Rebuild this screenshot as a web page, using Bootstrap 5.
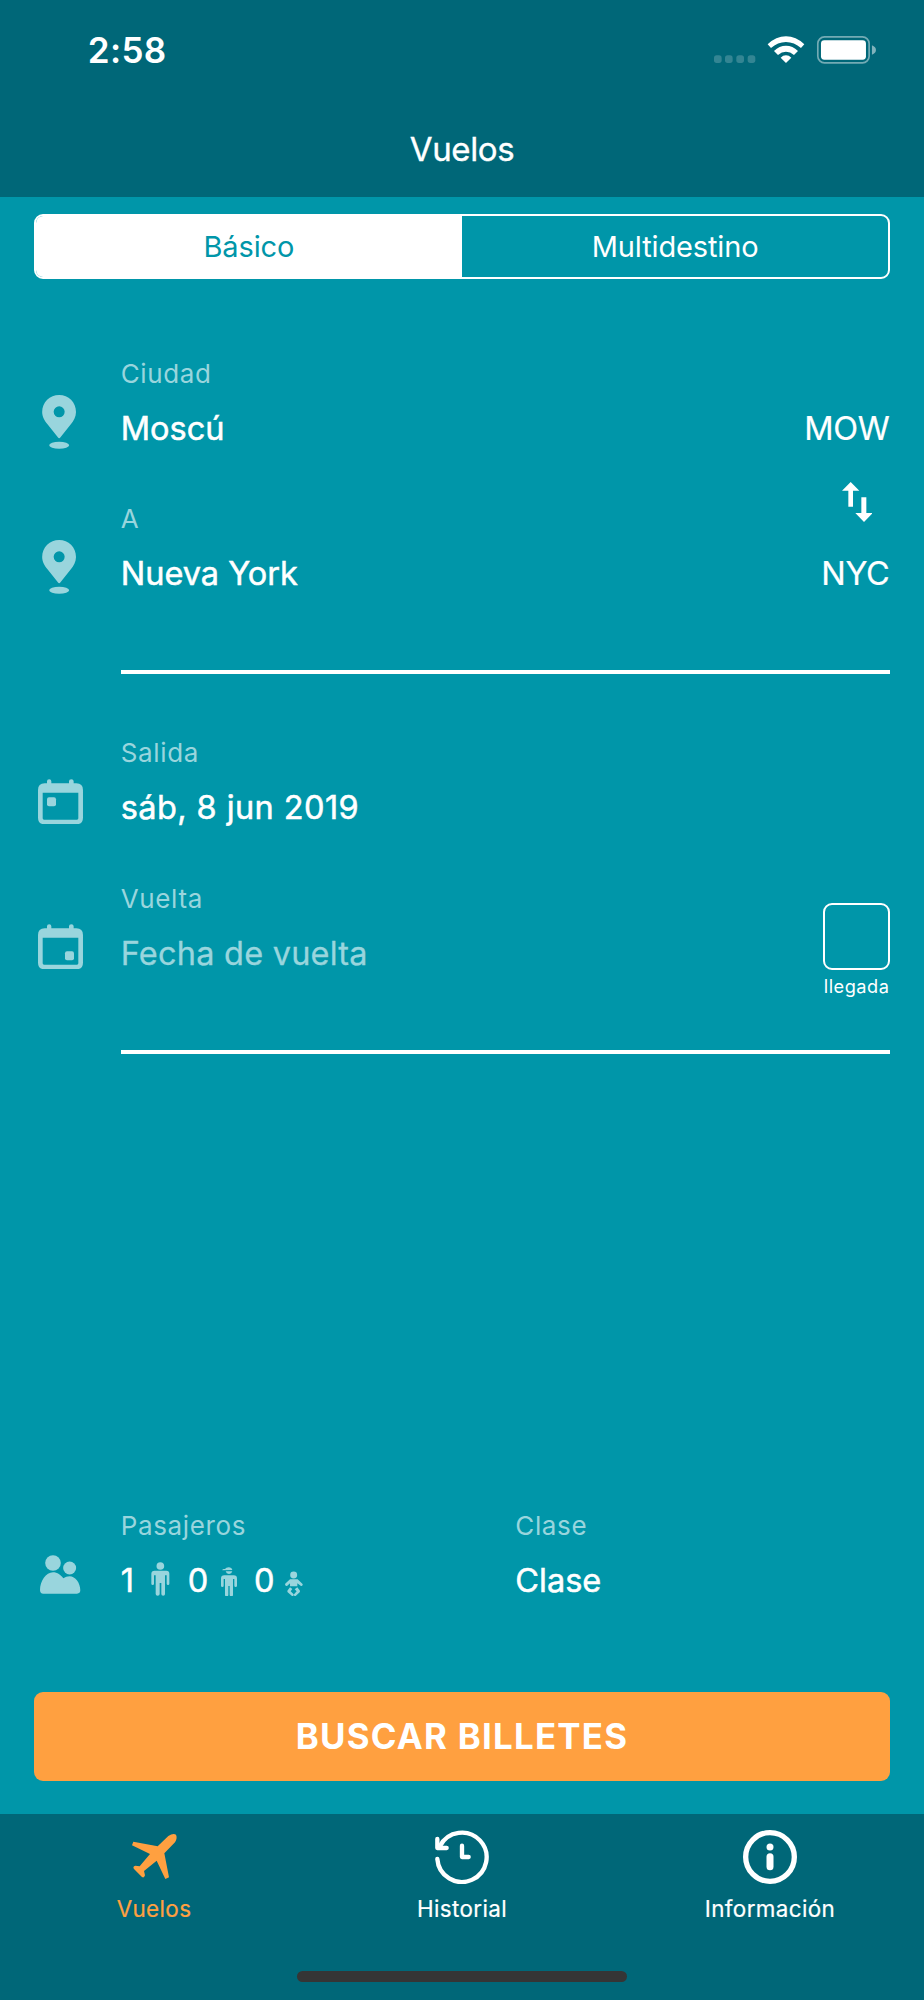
<!DOCTYPE html>
<html lang="es">
<head>
<meta charset="utf-8">
<meta name="viewport" content="width=device-width, initial-scale=1">
<title>Vuelos</title>
<link href="https://cdn.jsdelivr.net/npm/bootstrap@5.3.0/dist/css/bootstrap.min.css" rel="stylesheet">
<script src="https://cdn.jsdelivr.net/npm/bootstrap@5.3.0/dist/js/bootstrap.bundle.min.js"></script>
<style>
  :root { --teal: #0096a9; --teal-dark: #006778; --soft: #99d5dd; --orange: #ffa040; }
  body { background: var(--teal); color: #fff; font-family: Inter, "Liberation Sans", sans-serif; }
  svg { display: block; fill: currentColor; }
  .screen { width: 924px; height: 2000px; }
  .top-bar { height: 196.7px; background: var(--teal-dark); }
  .status { padding: 30px 46.7px 0 87.8px; height: 72px; }
  .status svg { margin-top: 5.3px; }
  .clock { font-size: 35px; font-weight: 600; line-height: 40px; letter-spacing: .34px; }
  .title { font-size: 33px; line-height: 40px; margin-top: 57px; letter-spacing: -.36px; -webkit-text-stroke: .35px; }
  .content { padding: 17.6px 33.7px 33px; }
  .segments { height: 65px; border: 2.3px solid #fff; border-radius: 9px; overflow: hidden; font-size: 29px; line-height: 36px; letter-spacing: -.13px; }
  .segments button { border: 0; background: none; color: #fff; padding: 1px 0 0; letter-spacing: inherit; }
  .segments .on { background: #fff; color: var(--teal); }
  .first { margin-top: 78.7px; }
  .second { margin-top: 63px; }
  .field { height: 145.2px; }
  .field-icon { width: 87px; flex: none; color: var(--soft); }
  .pin { margin: 36.8px 0 0 8.8px; }
  .cal { margin: 41.2px 0 0 4.4px; }
  .people { margin: 45.4px 0 0 6.6px; }
  .caption { font-size: 26px; line-height: 32px; color: var(--soft); margin-bottom: 19px; letter-spacing: .65px; }
  .value { font-size: 32.5px; line-height: 40px; letter-spacing: 0; -webkit-text-stroke: .5px; }
  .value .code { letter-spacing: -.4px; margin-right: 1px; -webkit-text-stroke: .2px; }
  .value.date { letter-spacing: .42px; }
  .value.placeholder-text { color: var(--soft); letter-spacing: .22px; -webkit-text-stroke: .3px; }
  .rule { height: 4px; margin: 22px 0 0 87px; background: #fff; }
  .swap { right: 18.1px; top: 123.8px; }
  .one-way { width: 67.5px; right: 0; top: 20px; }
  .box { width: 67.5px; height: 67.5px; border: 2.4px solid #fff; border-radius: 9px; }
  .one-way span { font-size: 18.2px; line-height: 24px; margin-top: 3.6px; letter-spacing: .5px; }
  .passengers { margin-bottom: 36.3px; }
  .who { width: 394.6px; }
  .count { height: 40px; }
  .count span { width: 20.5px; }
  .count svg { color: var(--soft); margin-bottom: 4.8px; }
  .adult { margin: 0 17.8px 0 10px; }
  .child { margin: 0 17.3px 0 12.6px; }
  .infant { margin-left: 10.8px; }
  .search { height: 89.5px; border: 0; border-radius: 9px; background: var(--orange); color: #fff; font-weight: 700; font-size: 34.8px; padding: 0; letter-spacing: 1.27px; }
  .tabs { height: 186px; background: var(--teal-dark); }
  .tab { color: #fff; text-decoration: none; padding-top: 16.3px; font-size: 22.4px; line-height: 28px; letter-spacing: .38px; -webkit-text-stroke: .2px; }
  .tab svg { margin-bottom: 10.5px; }
  .tab.current { color: var(--orange); }
  .home { width: 330px; height: 11px; border-radius: 6px; background: #353535; bottom: 18px; }
</style>
</head>
<body>
<div class="screen d-flex flex-column overflow-hidden">
  <header class="top-bar flex-shrink-0">
    <div class="status d-flex justify-content-between align-items-start">
      <span class="clock">2:58</span>
      <svg width="163.3" height="30" viewBox="756 106 490 90">
        <g fill-opacity=".2"><rect x="756" y="167" width="23" height="23" rx="8"/><rect x="789" y="167" width="23" height="23" rx="8"/><rect x="823" y="167" width="23" height="23" rx="8"/><rect x="857" y="167" width="23" height="23" rx="8"/></g>
        <path d="M917 134Q942 110 972 110Q1002 110 1027 134L1017 145Q997 127 972 127Q947 127 927 145ZM936 154Q952 138 972 138Q992 138 1008 154L996 166Q985 156 972 156Q959 156 948 166ZM956 174Q963 167 972 167Q981 167 988 174L972 190Z"/>
        <rect x="1067.500" y="111.500" width="154" height="78" rx="20" fill="none" stroke="#fff" stroke-opacity=".45" stroke-width="5"/>
        <path d="M1230 137Q1242 142 1242 151Q1242 160 1230 165Z" fill-opacity=".5"/>
        <rect x="1077" y="122" width="135" height="58" rx="10"/>
      </svg>
    </div>
    <h1 class="title text-center fw-normal mb-0">Vuelos</h1>
  </header>

  <main class="content flex-grow-1 d-flex flex-column">
    <div class="segments d-flex flex-shrink-0" role="tablist">
      <button class="on w-50">Básico</button>
      <button class="w-50">Multidestino</button>
    </div>

    <section class="first position-relative">
      <div class="field d-flex">
        <div class="field-icon"><svg class="pin" width="34" height="54" viewBox="126.500 165 102 162"><path fill-rule="evenodd" d="M178 165C206 165 228.500 187 228.500 216C228.500 231 221 243 213 253L182 292Q178 298 174 292L143 253C135 243 127 231 127 216C127 187 150 165 178 165ZM178 199A16.500 16.500 0 1 0 178 232A16.500 16.500 0 1 0 178 199Z"/><ellipse cx="178" cy="316" rx="30" ry="10.500"/></svg></div>
        <div class="flex-grow-1">
          <div class="caption">Ciudad</div>
          <div class="value d-flex justify-content-between"><span>Moscú</span><span class="code">MOW</span></div>
        </div>
      </div>
      <div class="field d-flex">
        <div class="field-icon"><svg class="pin" width="34" height="54" viewBox="126.500 165 102 162"><path fill-rule="evenodd" d="M178 165C206 165 228.500 187 228.500 216C228.500 231 221 243 213 253L182 292Q178 298 174 292L143 253C135 243 127 231 127 216C127 187 150 165 178 165ZM178 199A16.500 16.500 0 1 0 178 232A16.500 16.500 0 1 0 178 199Z"/><ellipse cx="178" cy="316" rx="30" ry="10.500"/></svg></div>
        <div class="flex-grow-1">
          <div class="caption">A</div>
          <div class="value d-flex justify-content-between"><span>Nueva York</span><span class="code">NYC</span></div>
        </div>
      </div>
      <svg class="swap position-absolute" width="30.700" height="40" viewBox="425 307 92 120"><path d="M451 307L477 333H458V381H444V333H425ZM483 353H498V400H517L491 427L465 400H483Z"/></svg>
      <div class="rule"></div>
    </section>

    <section class="second">
      <div class="field d-flex">
        <div class="field-icon"><svg class="cal" width="45" height="45.300" viewBox="114 146 135 136"><path fill-rule="evenodd" d="M141 159V153Q141 147 147.500 147Q154 147 154 153V159H207V153Q207 147 214 147Q221 147 221 153V159H229Q249 159 249 179V262Q249 282 229 282H134Q114 282 114 262V179Q114 159 134 159ZM128 187V264Q128 268 132 268H231Q235 268 235 264V187Z"/><rect x="141" y="201" width="27" height="27" rx="6"/></svg></div>
        <div class="flex-grow-1">
          <div class="caption">Salida</div>
          <div class="value date">sáb, 8 jun 2019</div>
        </div>
      </div>
      <div class="field d-flex position-relative">
        <div class="field-icon"><svg class="cal" width="45" height="45.300" viewBox="114 146 135 136"><path fill-rule="evenodd" d="M141 159V153Q141 147 147.500 147Q154 147 154 153V159H207V153Q207 147 214 147Q221 147 221 153V159H229Q249 159 249 179V262Q249 282 229 282H134Q114 282 114 262V179Q114 159 134 159ZM128 187V264Q128 268 132 268H231Q235 268 235 264V187Z"/><rect x="195" y="228" width="27" height="27" rx="6"/></svg></div>
        <div class="flex-grow-1">
          <div class="caption">Vuelta</div>
          <div class="value placeholder-text">Fecha de vuelta</div>
        </div>
        <div class="one-way position-absolute text-center"><div class="box"></div><span class="d-block">llegada</span></div>
      </div>
      <div class="rule"></div>
    </section>

    <section class="passengers mt-auto d-flex">
      <div class="field d-flex">
        <div class="field-icon"><svg class="people" width="40.300" height="38.700" viewBox="120 196 121 116"><circle cx="159" cy="220" r="23.500"/><circle cx="209" cy="235" r="19.500"/><path d="M130 312Q120 312 120 301C120 275 138 248 159 248C172 248 183 256 190 266C196 262 202 260 209 260C226 260 241 280 241 302Q241 312 231 312Z"/></svg></div>
        <div class="who">
          <div class="caption">Pasajeros</div>
          <div class="value count d-flex align-items-end">
            <span>1</span>
            <svg class="adult" width="18.700" height="34" viewBox="454 217 56 102"><circle cx="482" cy="229" r="11.500"/><path d="M465 243H500Q509 243 509 252V282Q509 286 505 286Q501 286 501 282V257H496V313Q496 318 490.500 318Q485 318 485 313V280H480V313Q480 318 474 318Q468 318 468 313V257H463V282Q463 286 459 286Q455 286 455 282V252Q455 243 465 243Z"/></svg>
            <span>0</span>
            <svg class="child" width="16" height="29.700" viewBox="663 230 48 89"><path d="M675 236Q678 231 686 231Q695 231 697 239L667 240Q667 236 672 236ZM677 243H697Q695 251 687 251Q679 251 677 243ZM673 255H701Q711 255 711 265V286Q711 290 707 290Q703 290 703 286V266H699V314Q699 318 694 318Q689 318 689 314V287H685V314Q685 318 680 318Q675 318 675 314V266H671V286Q671 290 667 290Q663 290 663 286V265Q663 255 673 255Z"/></svg>
            <span>0</span>
            <svg class="infant" width="18" height="25.300" viewBox="857 242 54 76"><circle cx="883" cy="254" r="10.500"/><path d="M872 267H895L909 280Q912 284 908 286Q905 288 902 285L894 279V288H872V279L864 286Q860 288 858 285Q856 282 859 279ZM872 291L879 296L874 303L883 312Q884 317 879 318L865 306Q863 303 865 300ZM894 291L901 300Q903 303 901 306L888 318Q883 317 884 312L892 303L886 297Z"/></svg>
          </div>
        </div>
        <div>
          <div class="caption">Clase</div>
          <div class="value">Clase</div>
        </div>
      </div>
    </section>

    <button class="search w-100 flex-shrink-0">BUSCAR BILLETES</button>
  </main>

  <nav class="tabs d-flex position-relative flex-shrink-0">
    <a class="tab current w-100 d-flex flex-column align-items-center"><svg width="54" height="54" viewBox="381 481 162 162"><path d="M473 530L505 499Q519 490 528 495Q533 505 525 518L493 551L507 623L496 628L470 573L432 604L435 617Q432 627 425 621L402 598Q397 590 406 588L419 590L450 553L396 527L400 516Z"/></svg>Vuelos</a>
    <a class="tab w-100 d-flex flex-column align-items-center"><svg width="54" height="54" viewBox="165 90 162 162" stroke="currentColor" stroke-width="13" stroke-linecap="round" stroke-linejoin="round"><path fill="none" d="M172 177A74 74 0 1 0 180 138"/><path fill="none" d="M172 117V144H200M246 137V171H266"/></svg>Historial</a>
    <a class="tab w-100 d-flex flex-column align-items-center"><svg width="54" height="54" viewBox="186 90 162 162"><circle cx="267" cy="171" r="73" fill="none" stroke="currentColor" stroke-width="16"/><circle cx="267" cy="141" r="10.500"/><rect x="256.500" y="160" width="21" height="51" rx="10.500"/></svg>Información</a>
    <div class="home position-absolute start-50 translate-middle-x"></div>
  </nav>
</div>
</body>
</html>
